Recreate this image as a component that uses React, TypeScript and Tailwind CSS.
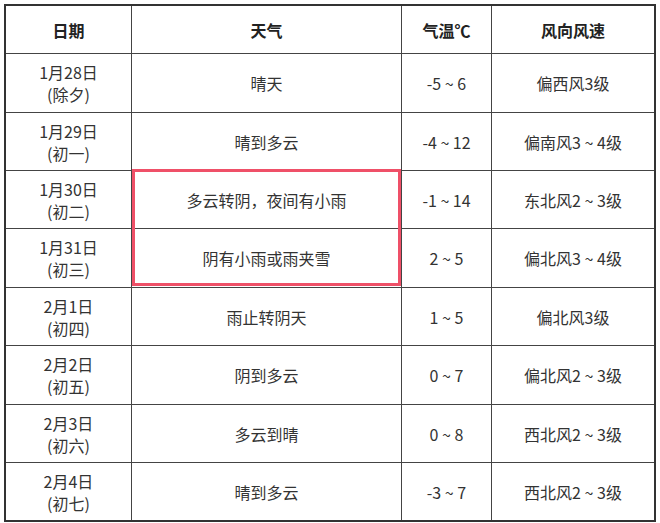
const rows = [
  { date: '1月28日', lunar: '(除夕)', weather: '晴天', temp: '-5 ~ 6', wind: '偏西风3级', h: 'h-[59px]' },
  { date: '1月29日', lunar: '(初一)', weather: '晴到多云', temp: '-4 ~ 12', wind: '偏南风3 ~ 4级', h: 'h-[58px]' },
  { date: '1月30日', lunar: '(初二)', weather: '多云转阴，夜间有小雨', temp: '-1 ~ 14', wind: '东北风2 ~ 3级', h: 'h-[58px]' },
  { date: '1月31日', lunar: '(初三)', weather: '阴有小雨或雨夹雪', temp: '2 ~ 5', wind: '偏北风3 ~ 4级', h: 'h-[59px]' },
  { date: '2月1日', lunar: '(初四)', weather: '雨止转阴天', temp: '1 ~ 5', wind: '偏北风3级', h: 'h-[58px]' },
  { date: '2月2日', lunar: '(初五)', weather: '阴到多云', temp: '0 ~ 7', wind: '偏北风2 ~ 3级', h: 'h-[59px]' },
  { date: '2月3日', lunar: '(初六)', weather: '多云到晴', temp: '0 ~ 8', wind: '西北风2 ~ 3级', h: 'h-[58px]' },
  { date: '2月4日', lunar: '(初七)', weather: '晴到多云', temp: '-3 ~ 7', wind: '西北风2 ~ 3级', h: 'h-[57px]' },
];

const cols = 'grid grid-cols-[126px_270px_90px_162px]';

export default function App() {
  return (
    <div
      className="w-[660px] h-[523px] bg-white pt-[4px] pl-[4px] text-[#333]"
      style={{ fontFamily: '"Noto Sans CJK SC", "Noto Sans", sans-serif' }}
    >
      <div className="relative w-[652px] border-2 border-[#333]">
        <div className={`${cols} h-[48px] border-b border-[#444] text-[16px] font-bold text-[#222]`}>
          <div className="flex items-center justify-center border-r border-[#444]">日期</div>
          <div className="flex items-center justify-center border-r border-[#444]">天气</div>
          <div className="flex items-center justify-center border-r border-[#444]">气温℃</div>
          <div className="flex items-center justify-center">风向风速</div>
        </div>
        {rows.map((r, i) => (
          <div
            key={r.date}
            className={`${cols} ${r.h} text-[16px] ${i < rows.length - 1 ? 'border-b border-[#444]' : ''}`}
          >
            <div className="flex flex-col items-center justify-center border-r border-[#444] leading-[22px]">
              <span>{r.date}</span>
              <span>{r.lunar}</span>
            </div>
            <div className="flex items-center justify-center border-r border-[#444]">{r.weather}</div>
            <div className="flex items-center justify-center border-r border-[#444]">{r.temp}</div>
            <div className="flex items-center justify-center">{r.wind}</div>
          </div>
        ))}
        <div className="absolute left-[126px] top-[163px] w-[269px] h-[117px] border-[3px] border-[#ef5068] pointer-events-none" />
      </div>
    </div>
  );
}
